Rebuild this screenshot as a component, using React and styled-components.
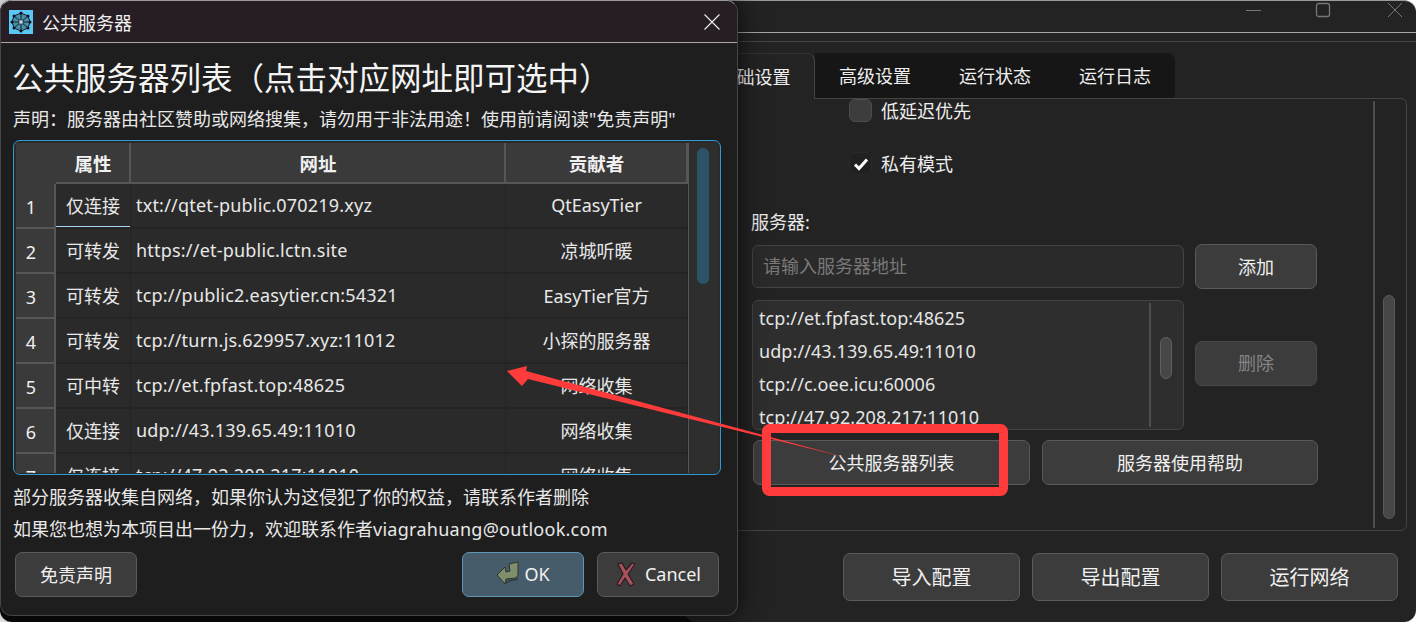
import React from 'react';
import styled, { createGlobalStyle } from 'styled-components';

const Global = createGlobalStyle`
  html, body { margin: 0; padding: 0; background: #fff; overflow: hidden; }
  * { box-sizing: border-box; }
  body { font-family: "Noto Sans", "Noto Sans CJK SC", sans-serif; font-size: 18px; color: #eee; }
`;

const Desk = styled.div`
  position: relative;
  width: 1416px;
  height: 622px;
  overflow: hidden;
`;
const BackWindow = styled.div`
  position: absolute;
  left: 0;
  top: 0;
  width: 720px;
  height: 622px;
  border-radius: 12px;
  background: #0b0b0b;
`;

/* ---------- main window ---------- */
const MainWindow = styled.div`
  position: absolute;
  left: 684px;
  top: 0;
  width: 732px;
  height: 622px;
  isolation: isolate;
  display: flex;
  flex-direction: column;
  background: #232323;
  border-top: 1px solid #9a9a9a;
  border-radius: 0 12px 12px 12px;
`;
const MainTitle = styled.div`
  height: 32px;
  flex: none;
  border-bottom: 1px solid #a8a8a8;
`;
const WinControls = styled.div`
  display: flex;
  justify-content: flex-end;
  height: 100%;
  padding: 1px 13px 0 0;
  gap: 56px;
`;
const WinIcon = styled.svg`
  display: block;
  width: 16px;
  height: 16px;
  margin-right: ${p => p.$mr || 0}px;
  fill: none;
  stroke: ${p => p.$c || '#777'};
`;
const MenuBar = styled.div`
  height: 9px;
  flex: none;
  border-bottom: 1px solid #444;
`;
const TabRow = styled.div`
  display: flex;
  height: 46px;
  flex: none;
  margin: 11px 0 -1px 11px;
  position: relative;
  z-index: 1;
`;
const Tab = styled.div`
  width: 120px;
  display: flex;
  align-items: center;
  justify-content: center;
  font-size: 18px;
  padding-bottom: 1px;
  color: #f0f0f0;
  background: ${p => (p.$active ? '#232323' : '#161616')};
  border-bottom: 1px solid ${p => (p.$active ? 'transparent' : '#444')};
  border-right: ${p => (p.$active ? '1px solid #444' : 'none')};
  border-top: ${p => (p.$active ? '1px solid #333' : 'none')};
  border-radius: ${p => (p.$active || p.$last ? '0 8px 0 0' : '0')};
`;
const Pane = styled.div`
  height: 433px;
  flex: none;
  margin: 0 9px 0 11px;
  display: flex;
  border: 1px solid #444;
  border-radius: 6px;
`;
const PaneContent = styled.div`
  flex: 1;
  min-width: 0;
  padding: 0 55px 0 56px;
  display: flex;
  flex-direction: column;
`;
const PaneScroll = styled.div`
  width: 33px;
  flex: none;
  margin: 2px 0;
  border-left: 2px solid #4d4d4d;
  padding: 194px 0 11px 8px;
`;
const PaneThumb = styled.div`
  width: 12px;
  height: 224px;
  background: #474747;
  border: 1px solid #5a5a5a;
  border-radius: 6px;
`;
const CheckRow = styled.div`
  display: flex;
  align-items: center;
  gap: 9px;
  height: 23px;
  margin: ${p => p.$m || '0'};
  padding-left: 97px;
  font-size: 18px;
  color: #eee;
`;
const CheckBox = styled.div`
  width: 23px;
  height: 23px;
  flex: none;
  display: flex;
  align-items: center;
  justify-content: center;
  border-radius: 6px;
  background: ${p => (p.$checked ? '#212121' : '#3d3d3d')};
  border: 1px solid ${p => (p.$checked ? '#2a2a2a' : '#4c4c4c')};
`;
const CheckText = styled.span`
  padding-bottom: 2px;
`;
const FieldLabel = styled.div`
  height: 24px;
  line-height: 24px;
  margin: 35px 0 10px -1px;
  font-size: 18px;
  color: #e8e8e8;
`;
const InputRow = styled.div`
  display: grid;
  grid-template-columns: 432px 122px;
  gap: 11px;
  align-items: center;
`;
const FakeInput = styled.div`
  height: 43px;
  background: #2a2a2a;
  border: 1px solid #444;
  border-radius: 6px;
  padding: 0 0 3px 10px;
  display: flex;
  align-items: center;
  color: #787878;
  font-size: 18px;
`;
const Button = styled.div`
  height: ${p => p.$h || 45}px;
  width: ${p => (p.$w ? p.$w + 'px' : 'auto')};
  display: flex;
  align-items: center;
  justify-content: center;
  gap: ${p => p.$gap || 0}px;
  flex: none;
  padding-bottom: 2px;
  margin-bottom: ${p => (p.$disabled ? 4 : 0)}px;
  background: ${p => (p.$primary ? '#475c6a' : '#3c3c3c')};
  border: 1px solid ${p => (p.$primary ? '#5f95b6' : p.$disabled ? '#484848' : '#5a5a5a')};
  border-radius: 7px;
  font-size: ${p => p.$size || 18}px;
  color: ${p => (p.$disabled ? '#858585' : '#f0f0f0')};
`;
const ServerRow = styled(InputRow)`
  margin-top: 11px;
`;
const ServerList = styled.div`
  height: 130px;
  display: flex;
  background: #2e2e2e;
  border: 1px solid #444;
  border-radius: 6px;
  overflow: hidden;
`;
const ServerItems = styled.div`
  flex: 1;
  padding: 1px 0 0 6px;
`;
const ServerItem = styled.div`
  height: 33px;
  line-height: 33px;
  font-size: 18px;
  letter-spacing: 0.08px;
  color: #e6e6e6;
  white-space: nowrap;
`;
const ListScroll = styled.div`
  width: 34px;
  flex: none;
  margin: 2px 0;
  border-left: 2px solid #4d4d4d;
  padding: 34px 0 0 9px;
`;
const ListThumb = styled.div`
  width: 12px;
  height: 42px;
  background: #474747;
  border: 1px solid #5f5f5f;
  border-radius: 6px;
`;
const HelpRow = styled.div`
  display: grid;
  grid-template-columns: 277px 276px;
  gap: 12px;
  margin: 10px 0 0 1px;
`;
const MainFooter = styled.div`
  display: flex;
  justify-content: flex-end;
  gap: 12px;
  padding-right: 18px;
  margin-top: 22px;
`;

/* ---------- dialog ---------- */
const Dialog = styled.div`
  position: absolute;
  z-index: 1;
  left: 0;
  top: 0;
  width: 738px;
  height: 616px;
  display: flex;
  flex-direction: column;
  background: #1e1e1e;
  border: 1px solid #454545;
  border-top-color: #9a9a9a;
  border-radius: 12px;
  overflow: hidden;
  box-shadow: 0 0 26px rgba(0, 0, 0, 0.75);
`;
const DialogTitle = styled.div`
  height: 42px;
  flex: none;
  display: flex;
  align-items: center;
  padding: 0 17px 0 8px;
  background: #261e24;
  border-bottom: 1px solid #a8a8a8;
  font-size: 18px;
  color: #f0f0f0;
`;
const TitleText = styled.span`
  flex: 1;
  margin-left: 9px;
`;
const DialogBody = styled.div`
  flex: 1;
  display: flex;
  flex-direction: column;
  padding: 12px 16px 0 12px;
`;
const Heading = styled.h1`
  margin: 0 0 0 -1px;
  height: 46px;
  line-height: 46px;
  font-size: 31.5px;
  font-weight: 400;
  white-space: nowrap;
  color: #f4f4f4;
`;
const Notice = styled.div`
  height: 24px;
  margin-top: 6px;
  line-height: 24px;
  font-size: 18px;
  white-space: nowrap;
  color: #e8e8e8;
`;
const TableBox = styled.div`
  height: 335px;
  margin: 9px 0 6px 0;
  display: flex;
  padding: 2px 2px 1px 2px;
  border: 1px solid #2f9ad2;
  border-radius: 7px;
  overflow: hidden;
  background: #2a2a2a;
`;
const TableGrid = styled.div`
  display: grid;
  grid-template-columns: 40px 75px 375px 182px;
  grid-auto-rows: 45px;
  grid-template-rows: 41px;
  flex: none;
  height: 100%;
  overflow: hidden;
`;
const Corner = styled.div`
  background: #3a3a3a;
`;
const HeadCell = styled.div`
  background: #3a3a3a;
  border-right: 2px solid #565656;
  border-bottom: 2px solid #565656;
  display: flex;
  align-items: center;
  justify-content: center;
  padding-left: 1px;
  font-size: 18.5px;
  font-weight: 700;
  color: #f0f0f0;
`;
const RowHead = styled(HeadCell)`
  font-size: 18px;
  font-weight: 400;
  padding: 3px 8px 0 0;
`;
const Cell = styled.div`
  background: #2a2a2a;
  border-right: 1px solid #242424;
  border-bottom: 2px solid #242424;
  display: flex;
  align-items: center;
  justify-content: ${p => (p.$left ? 'flex-start' : 'center')};
  padding-left: ${p => (p.$left ? '5px' : '0')};
  padding-bottom: 2px;
  font-size: 18px;
  letter-spacing: ${p => (p.$left ? '0.2px' : '0')};
  color: #e8e8e8;
  white-space: nowrap;
  ${p => (p.$selected ? 'box-shadow: inset 0 -1px 0 #a6d8f5;' : '')}
`;
const TableScroll = styled.div`
  flex: 1;
  background: #2e2e2e;
  border-left: 1px solid #555;
  padding: 5px 0 0 8px;
`;
const TableThumb = styled.div`
  width: 12px;
  height: 136px;
  background: #2b5468;
  border-radius: 6px;
`;
const FootNote = styled.div`
  height: 32px;
  line-height: 32px;
  font-size: 18px;
  white-space: nowrap;
  color: #e8e8e8;
`;
const Email = styled.span`
  letter-spacing: 0.27px;
`;
const DialogButtons = styled.div`
  display: flex;
  align-items: center;
  margin: 7px 2px 0 2px;
  gap: 13px;
`;
const Spacer = styled.div`
  flex: 1;
`;
const Annotation = styled.svg`
  position: absolute;
  z-index: 2;
  left: 0;
  top: 0;
  width: 1416px;
  height: 622px;
  pointer-events: none;
`;

const rows = [
  ['仅连接', 'txt://qtet-public.070219.xyz', 'QtEasyTier'],
  ['可转发', 'https://et-public.lctn.site', '凉城听暖'],
  ['可转发', 'tcp://public2.easytier.cn:54321', 'EasyTier官方'],
  ['可转发', 'tcp://turn.js.629957.xyz:11012', '小探的服务器'],
  ['可中转', 'tcp://et.fpfast.top:48625', '网络收集'],
  ['仅连接', 'udp://43.139.65.49:11010', '网络收集'],
  ['仅连接', 'tcp://47.92.208.217:11010', '网络收集'],
];
const servers = [
  'tcp://et.fpfast.top:48625',
  'udp://43.139.65.49:11010',
  'tcp://c.oee.icu:60006',
  'tcp://47.92.208.217:11010',
];

const AppIcon = () => {
  const pts = [[12, 3], [19, 6], [21, 12], [19, 18], [12, 21], [5, 18], [3, 12], [5, 6]];
  return (
    <svg width="24" height="24" viewBox="0 0 24 24">
      <rect width="24" height="24" fill="#5cc6f7" />
      <polygon points={pts.map(p => p.join(',')).join(' ')} fill="#4a8fa8" stroke="#123" strokeWidth="1" />
      {pts.map((p, i) => (
        <line key={i} x1="12" y1="12" x2={p[0]} y2={p[1]} stroke="#14222c" strokeWidth="1" />
      ))}
      {pts.map((p, i) => (
        <circle key={i} cx={p[0]} cy={p[1]} r="1.5" fill="#0d1418" />
      ))}
      <rect x="10" y="10" width="4" height="4" fill="#b9dbe6" stroke="#123" strokeWidth=".6" />
    </svg>
  );
};

const OkIcon = () => (
  <svg width="24" height="26" viewBox="0 0 24 26">
    <path d="M13 3 L22 1 L22 14 L20 17 L10 18 L9 23 L1 14 L9 6 L10 11 L14 10 Z" fill="#7f8f6c" stroke="#2f3528" strokeWidth="1" strokeLinejoin="round" />
    <path d="M10 22 L13 20 L22 18" fill="none" stroke="#27302f" strokeWidth="2" opacity=".6" />
  </svg>
);
const CancelIcon = () => (
  <svg width="22" height="26" viewBox="0 0 22 26">
    <path d="M3 3 L7 2 L11 9 L17 2 L20 3 L13 13 L19 23 L15 25 L10 17 L5 25 L2 23 L8 13 Z" fill="#a8505e" stroke="#2a1a1e" strokeWidth="1.2" strokeLinejoin="round" />
  </svg>
);

export default function App() {
  return (
    <Desk>
      <Global />
      <BackWindow />
      <MainWindow>
        <MainTitle>
          <WinControls>
            <WinIcon $mr={-3} viewBox="0 0 16 16"><path d="M0 8.5H15" /></WinIcon>
            <WinIcon viewBox="0 0 16 16"><rect x="1.5" y="1.5" width="13" height="13" rx="2" strokeWidth="1.3" /></WinIcon>
            <WinIcon viewBox="0 0 16 16"><path d="M1 1L15 15M15 1L1 15" /></WinIcon>
          </WinControls>
        </MainTitle>
        <MenuBar />
        <TabRow>
          <Tab $active>基础设置</Tab>
          <Tab>高级设置</Tab>
          <Tab>运行状态</Tab>
          <Tab $last>运行日志</Tab>
        </TabRow>
        <Pane>
          <PaneContent>
            <CheckRow>
              <CheckBox />
              <CheckText>低延迟优先</CheckText>
            </CheckRow>
            <CheckRow $m="30px 0 0 0">
              <CheckBox $checked>
                <svg width="16" height="14" viewBox="0 0 16 14">
                  <path d="M2 7.5L6 11.5L14 2.5" fill="none" stroke="#fff" strokeWidth="3" />
                </svg>
              </CheckBox>
              <CheckText>私有模式</CheckText>
            </CheckRow>
            <FieldLabel>服务器:</FieldLabel>
            <InputRow>
              <FakeInput>请输入服务器地址</FakeInput>
              <Button>添加</Button>
            </InputRow>
            <ServerRow>
              <ServerList>
                <ServerItems>
                  {servers.map(s => <ServerItem key={s}>{s}</ServerItem>)}
                </ServerItems>
                <ListScroll><ListThumb /></ListScroll>
              </ServerList>
              <Button $disabled>删除</Button>
            </ServerRow>
            <HelpRow>
              <Button>公共服务器列表</Button>
              <Button>服务器使用帮助</Button>
            </HelpRow>
          </PaneContent>
          <PaneScroll><PaneThumb /></PaneScroll>
        </Pane>
        <MainFooter>
          <Button $w={177} $h={48} $size={20}>导入配置</Button>
          <Button $w={177} $h={48} $size={20}>导出配置</Button>
          <Button $w={177} $h={48} $size={20}>运行网络</Button>
        </MainFooter>
      </MainWindow>

      <Dialog>
        <DialogTitle>
          <AppIcon />
          <TitleText>公共服务器</TitleText>
          <WinIcon $c="#e8e8e8" viewBox="0 0 16 16"><path d="M0.5 0.5L15.5 15.5M15.5 0.5L0.5 15.5" strokeWidth="1.2" /></WinIcon>
        </DialogTitle>
        <DialogBody>
          <Heading>公共服务器列表（点击对应网址即可选中）</Heading>
          <Notice>声明：服务器由社区赞助或网络搜集，请勿用于非法用途！使用前请阅读"免责声明"</Notice>
          <TableBox>
            <TableGrid>
              <Corner />
              <HeadCell>属性</HeadCell>
              <HeadCell>网址</HeadCell>
              <HeadCell>贡献者</HeadCell>
              {rows.map((r, i) => (
                <React.Fragment key={i}>
                  <RowHead>{i + 1}</RowHead>
                  <Cell $selected={i === 0}>{r[0]}</Cell>
                  <Cell $left>{r[1]}</Cell>
                  <Cell>{r[2]}</Cell>
                </React.Fragment>
              ))}
            </TableGrid>
            <TableScroll><TableThumb /></TableScroll>
          </TableBox>
          <FootNote>部分服务器收集自网络，如果你认为这侵犯了你的权益，请联系作者删除</FootNote>
          <FootNote>如果您也想为本项目出一份力，欢迎联系作者<Email>viagrahuang@outlook.com</Email></FootNote>
          <DialogButtons>
            <Button $w={122} $h={45}>免责声明</Button>
            <Spacer />
            <Button $w={122} $h={45} $primary $gap={4}><OkIcon />OK</Button>
            <Button $w={122} $h={45} $gap={8}><CancelIcon />Cancel</Button>
          </DialogButtons>
        </DialogBody>
      </Dialog>

      <Annotation viewBox="0 0 1416 622">
        <rect x="766.5" y="428.5" width="237" height="63" rx="3" fill="none" stroke="#ff3b3b" strokeWidth="9" />
        <polygon points="507,371 527,366 526,371 848,458 528,379 522,386" fill="#ff3b3b" />
      </Annotation>
    </Desk>
  );
}
